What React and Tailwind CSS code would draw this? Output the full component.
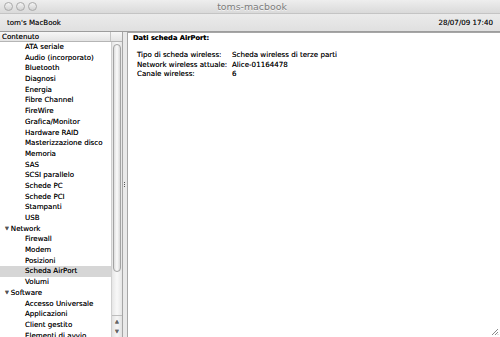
import React from 'react';

const items = [
    { label: 'ATA seriale', level: 1 },
    { label: 'Audio (incorporato)', level: 1 },
    { label: 'Bluetooth', level: 1 },
    { label: 'Diagnosi', level: 1 },
    { label: 'Energia', level: 1 },
    { label: 'Fibre Channel', level: 1 },
    { label: 'FireWire', level: 1 },
    { label: 'Grafica/Monitor', level: 1 },
    { label: 'Hardware RAID', level: 1 },
    { label: 'Masterizzazione disco', level: 1 },
    { label: 'Memoria', level: 1 },
    { label: 'SAS', level: 1 },
    { label: 'SCSI parallelo', level: 1 },
    { label: 'Schede PC', level: 1 },
    { label: 'Schede PCI', level: 1 },
    { label: 'Stampanti', level: 1 },
    { label: 'USB', level: 1 },
    { label: 'Network', level: 0 },
    { label: 'Firewall', level: 1 },
    { label: 'Modem', level: 1 },
    { label: 'Posizioni', level: 1 },
    { label: 'Scheda AirPort', level: 1, selected: true },
    { label: 'Volumi', level: 1 },
    { label: 'Software', level: 0 },
    { label: 'Accesso Universale', level: 1 },
    { label: 'Applicazioni', level: 1 },
    { label: 'Client gestito', level: 1 },
    { label: 'Elementi di avvio', level: 1 },
];

const details = [
    ['Tipo di scheda wireless:', 'Scheda wireless di terze parti'],
    ['Network wireless attuale:', 'Alice-01164478'],
    ['Canale wireless:', '6'],
];

// pallini del titolo (finestra inattiva)
const Light = () => (
    <div className="w-[9px] h-[9px] rounded-full border border-[#a9a9a9] bg-gradient-to-b from-[#f4f4f4] to-[#d2d2d2]" />
);

export default function App() {
    return (
        <div
            className="relative w-[500px] h-[337px] overflow-hidden flex flex-col bg-white text-black [text-shadow:0_0_0.35px_rgba(0,0,0,0.6)]"
            style={{ fontFamily: '"DejaVu Sans", Verdana, sans-serif' }}
        >
            {/* Title bar */}
            <div className="h-[14px] shrink-0 flex items-center bg-gradient-to-b from-[#eeeeee] to-[#dadada] border-b border-[#c4c4c4] relative">
                <div className="flex items-center gap-[3px] pl-[4px]">
                    <Light />
                    <Light />
                    <Light />
                </div>
                <div className="absolute inset-0 flex items-center justify-center pt-[2px] text-[9.4px] text-[#7c7c7c] pl-[4px] [text-shadow:0_1px_0_rgba(255,255,255,0.7)]">
                    toms-macbook
                </div>
            </div>

            {/* Toolbar */}
            <div className="h-[18px] shrink-0 flex items-center justify-between px-[7px] pt-[2px] bg-gradient-to-b from-[#ebebeb] to-[#e0e0e0] border-b border-[#9d9d9d] text-[7.1px] text-[#111]">
                <span>tom's MacBook</span>
                <span>28/07/09 17:40</span>
            </div>

            {/* Main */}
            <div className="flex-1 flex min-h-0 bg-[#e9e9e9]">
                {/* Left pane */}
                <div className="w-[123px] shrink-0 flex flex-col bg-white border-r border-[#a6a6a6]">
                    <div className="h-[10px] shrink-0 flex bg-gradient-to-b from-[#f7f7f7] to-[#e4e4e4] border-b border-[#b5b5b5] text-[7.1px] leading-[10px]">
                        <div className="w-[111px] pl-[2px] border-r border-[#c4c4c4]">Contenuto</div>
                        <div className="flex-1" />
                    </div>
                    <div className="flex-1 flex min-h-0">
                        <div className="w-[111px] flex flex-col text-[7.1px] text-black">
                            {items.map((it) => (
                                <div
                                    key={it.label}
                                    className={`h-[10.7px] shrink-0 flex items-center whitespace-nowrap ${it.selected ? 'bg-[#d6d6d6]' : ''} ${it.level === 0 ? 'pl-[5px]' : 'pl-[25px]'}`}
                                >
                                    {it.level === 0 && (
                                        <span className="text-[5px] text-[#555] mr-[2px]">▼</span>
                                    )}
                                    {it.label}
                                </div>
                            ))}
                        </div>
                        {/* Scrollbar */}
                        <div className="flex-1 flex flex-col border-l border-[#cfcfcf] bg-gradient-to-r from-[#e6e6e6] via-[#f8f8f8] to-[#e6e6e6]">
                            <div className="h-[2px] shrink-0" />
                            <div className="h-[228px] shrink-0 mx-[1px] rounded-full border border-[#a3a3a3] bg-gradient-to-r from-[#dedede] via-[#fbfbfb] to-[#d9d9d9]" />
                            <div className="flex-1" />
                            <div className="h-[22px] shrink-0 border-t border-[#bdbdbd] flex flex-col items-center justify-around text-[5px] text-[#666] bg-gradient-to-r from-[#e2e2e2] via-[#f6f6f6] to-[#e2e2e2]">
                                <span>▲</span>
                                <span>▼</span>
                            </div>
                        </div>
                    </div>
                </div>

                {/* Splitter */}
                <div className="w-[4px] shrink-0 flex items-center justify-center">
                    <div className="flex flex-col gap-[1px] -ml-[1px]">
                        <div className="w-[1px] h-[1px] bg-[#555]" />
                        <div className="w-[1px] h-[1px] bg-[#555]" />
                        <div className="w-[1px] h-[1px] bg-[#555]" />
                    </div>
                </div>

                {/* Right pane */}
                <div className="flex-1 bg-white border-l border-t border-[#a6a6a6] pl-[5px] pt-[1px] text-[7.1px] text-black">
                    <div className="font-bold text-[6.7px] leading-[9px]">Dati scheda AirPort:</div>
                    <div className="mt-[8px] pl-[4px] flex flex-col">
                        {details.map(([k, v]) => (
                            <div key={k} className="flex h-[9.5px] items-center whitespace-nowrap">
                                <span className="w-[95px] shrink-0">{k}</span>
                                <span>{v}</span>
                            </div>
                        ))}
                    </div>
                </div>
            </div>

            {/* Resize grip */}
            <svg className="absolute right-[1px] bottom-[1px]" width="9" height="9" viewBox="0 0 9 9">
                <path d="M8 2 L2 8 M8 5 L5 8 M8 7.5 L7.5 8" stroke="#8a8a8a" strokeWidth="1" />
            </svg>
        </div>
    );
}
